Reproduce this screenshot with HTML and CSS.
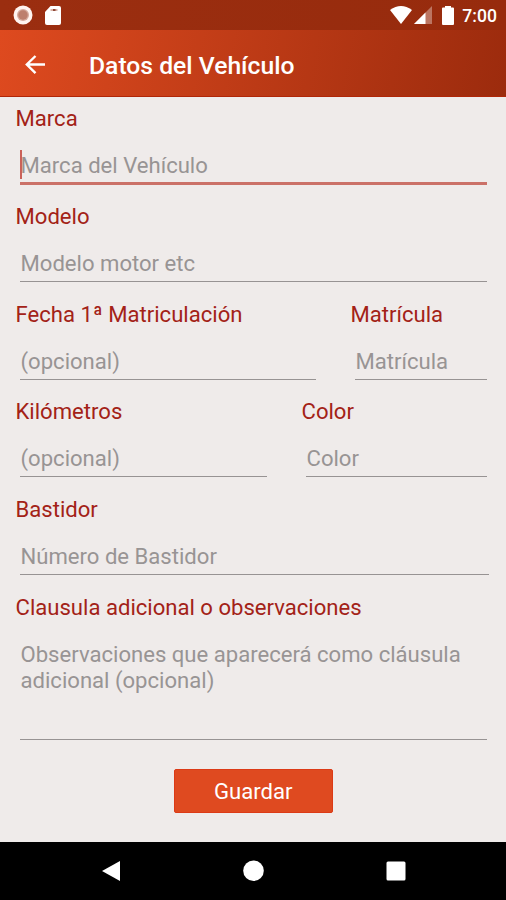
FILE: index.html
```html
<!DOCTYPE html>
<html lang="es">
<head>
<meta charset="utf-8">
<title>Datos del Vehículo</title>
<link rel="stylesheet" href="styles.css">
</head>
<body>
<div class="status">
  <svg width="20" height="20" viewBox="0 0 20 20"><circle cx="10" cy="10" r="9.5" fill="#fff4f0"/><circle cx="10" cy="10" r="6" fill="#d4a99c"/><circle cx="10" cy="10" r="4.7" fill="#bd7f6d"/></svg>
  <svg class="sd" width="16" height="19" viewBox="0 0 16 19"><path fill="#fff" d="M5.500 0H14q2 0 2 2v15q0 2-2 2H2q-2 0-2-2V6z"/><path d="M5.500 4h7" stroke="#d9b5aa" stroke-width="2"/><path d="M8 4h2.500" stroke="#8f4938" stroke-width="2"/></svg>
  <span class="spacer"></span>
  <svg width="22" height="18" viewBox="0 0 22 18"><path fill="#fff" d="M0 4Q11-4 22 4L11 18z"/></svg>
  <svg class="signal" width="18" height="18" viewBox="0 0 18 18"><path fill="#fff" opacity=".35" d="M18 0v18H0z"/><path fill="#fff" d="M11.5 6.5V18H0z"/></svg>
  <svg class="battery" width="12" height="19" viewBox="0 0 12 19"><path fill="#fff" d="M3 0h6v1.500H11q1 0 1 1V18q0 1-1 1H1q-1 0-1-1V2.500q0-1 1-1h2z"/></svg>
  <span class="time">7:00</span>
</div>
<header class="bar">
  <svg width="20" height="20" viewBox="0 0 20 20" fill="none" stroke="#fff" stroke-width="2.4"><path d="M20 9.500H2M10.500 1L1.800 9.500l8.700 8.700"/></svg>
  <h1>Datos del Vehículo</h1>
</header>
<main class="form">
  <div class="field focused"><label>Marca</label><div class="input"><span class="caret"></span>Marca del Vehículo</div></div>
  <div class="field"><label>Modelo</label><div class="input">Modelo motor etc</div></div>
  <div class="row date"><div class="field"><label>Fecha 1ª Matriculación</label><div class="input">(opcional)</div></div><div class="field"><label>Matrícula</label><div class="input">Matrícula</div></div></div>
  <div class="row km"><div class="field"><label>Kilómetros</label><div class="input">(opcional)</div></div><div class="field"><label>Color</label><div class="input">Color</div></div></div>
  <div class="field wide"><label>Bastidor</label><div class="input">Número de Bastidor</div></div>
  <div class="field notes"><label>Clausula adicional o observaciones</label><div class="input">Observaciones que aparecerá como cláusula adicional (opcional)</div></div>
  <button class="save">Guardar</button>
</main>
<nav class="nav">
  <svg width="19" height="20" viewBox="0 0 19 20"><path fill="#fff" d="M18 0v20L0 10z"/></svg>
  <svg width="22" height="22" viewBox="0 0 22 22"><circle cx="10.500" cy="10.700" r="10.300" fill="#fff"/></svg>
  <svg width="20" height="20" viewBox="0 0 20 20"><rect x=".5" y=".5" width="19" height="19" rx="1.500" fill="#fff"/></svg>
</nav>
</body>
</html>
```

FILE: styles.css
```css
* { box-sizing: border-box; }
body { margin: 0; width: 506px; height: 900px; overflow: hidden; display: flex; flex-direction: column; background: #efebea; font-family: Roboto, "Liberation Sans", sans-serif; }
svg { display: block; flex: none; }
.status { height: 30px; flex: none; display: flex; align-items: center; padding: 0 9px 0 13px; background: linear-gradient(90deg, #9b2e10, #972b0d); color: #fff; }
.sd { margin-left: 12px; }
.spacer { flex: 1; }
.signal { margin-left: 2px; }
.battery { margin-left: 10px; }
.time { margin-left: 8px; font-size: 17.6px; font-weight: 500; line-height: 30px; padding-top: 2px; }
.bar { height: 67px; flex: none; display: flex; align-items: center; padding: 3px 0 0 25px; gap: 44px; background: linear-gradient(100deg, #de4a1f, #9c2b0d); border-bottom: 1px solid #b02608; color: #fff; }
h1 { margin: 2px 0 0; font-size: 24.7px; font-weight: 500; }
.form { flex: 1; display: flex; flex-direction: column; padding: 8px 15px 0 15.5px; }
.field { height: 97.8px; flex: none; padding-right: 4px; }
.wide { padding-right: 2px; }
label { display: block; height: 28px; line-height: 26px; font-size: 22.1px; color: #a32217; white-space: nowrap; }
.input { position: relative; height: 51px; margin-left: 4.5px; padding: 19px 0 0 .5px; border-bottom: 1px solid #979393; color: #989494; font-size: 22.1px; line-height: 26px; white-space: nowrap; }
.focused .input { height: 52px; border-bottom: 3px solid #cb7168; }
.caret { position: absolute; left: 0; top: 17px; width: 2px; height: 29px; background: #cb6159; }
.row { display: grid; }
.date { grid-template-columns: 335px 1fr; }
.km { grid-template-columns: 286px 1fr; }
.row .field:first-child { padding-right: 35px; }
.notes { height: 175px; }
.notes .input { height: 118px; white-space: normal; }
.save { align-self: center; width: 159px; height: 44px; padding: 1px 0 0; border: 1px solid #dc3a16; border-radius: 2px; background: #df4a20; color: #fff; font: 22.1px Roboto, sans-serif; }
.nav { height: 58px; flex: none; display: flex; align-items: center; justify-content: space-between; padding: 0 100px 0 102px; background: #000; }
```
